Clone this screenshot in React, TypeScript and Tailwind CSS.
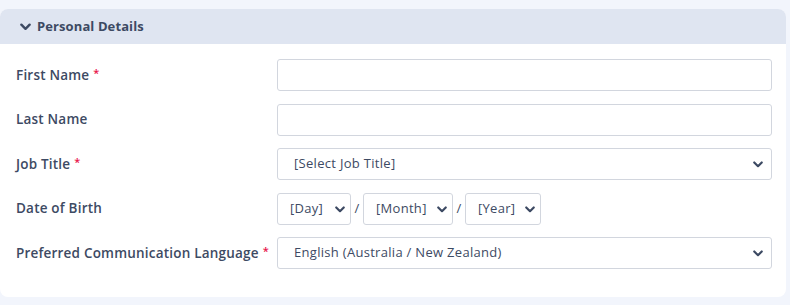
import { useState } from "react";

const Chevron = ({ className = "" }: { className?: string }) => (
  <svg viewBox="0 0 12 8" className={className} fill="none">
    <path d="M1.5 1.5 6 6l4.5-4.5" stroke="currentColor" strokeWidth="2.6" strokeLinecap="round" strokeLinejoin="round" />
  </svg>
);

const Req = () => <span className="ml-1 text-[#e8134a] text-[11px] align-top">*</span>;

const SelectBox = ({
  options,
  className = "",
  pad = "pl-4 pr-7",
  chevron = "right-[9px]",
}: {
  options: string[];
  className?: string;
  pad?: string;
  chevron?: string;
}) => (
  <div className={"relative " + className}>
    <select className={"w-full h-8 appearance-none rounded-[3px] border border-[#d2d6de] bg-white text-[13px] tracking-[0.3px] text-[#3d4a63] outline-none " + pad}>
      {options.map((o) => (
        <option key={o}>{o}</option>
      ))}
    </select>
    <Chevron className={"pointer-events-none absolute top-[13px] w-[10px] h-[7px] text-[#3d4a63] " + chevron} />
  </div>
);

const Row = ({ label, required, children }: { label: string; required?: boolean; children: React.ReactNode }) => (
  <div className="flex items-center h-8">
    <div className="w-[261px] shrink-0 text-[13.5px] tracking-[0.2px] font-semibold text-[#3d4a63]">
      {label}
      {required && <Req />}
    </div>
    <div className="flex-1">{children}</div>
  </div>
);

const App = () => {
  const [form, setForm] = useState({ firstName: "", lastName: "" });

  return (
    <div className="w-[790px] h-[305px] bg-[#f2f5fc] pt-[9px] pr-1 pb-2" style={{ fontFamily: '"Open Sans", "Liberation Sans", sans-serif' }}>
      <div className="rounded-lg bg-white overflow-hidden h-[288px]">
        <div className="flex items-center gap-[6px] h-[35px] bg-[#dfe5f1] pl-5 text-[13px] tracking-[0.1px] font-bold text-[#3d4a63]">
          <Chevron className="w-[11px] h-[8px]" />
          Personal Details
        </div>
        <div className="flex flex-col gap-[12.5px] pl-4 pr-[14px] pt-[15px]">
          <Row label="First Name" required>
            <input
              value={form.firstName}
              onChange={(e) => setForm({ ...form, firstName: e.target.value })}
              className="w-full h-8 rounded-[3px] border border-[#d2d6de] bg-white px-3 text-[13px] outline-none"
            />
          </Row>
          <Row label="Last Name">
            <input
              value={form.lastName}
              onChange={(e) => setForm({ ...form, lastName: e.target.value })}
              className="w-full h-8 rounded-[3px] border border-[#d2d6de] bg-white px-3 text-[13px] outline-none"
            />
          </Row>
          <Row label="Job Title" required>
            <SelectBox options={["[Select Job Title]"]} />
          </Row>
          <Row label="Date of Birth">
            <div className="flex items-center text-[13px] text-[#3d4a63]">
              <SelectBox options={["[Day]"]} className="w-[74px]" pad="pl-3 pr-5" chevron="right-[6px]" />
              <span className="w-3 text-center">/</span>
              <SelectBox options={["[Month]"]} className="w-[90px]" pad="pl-3 pr-5" chevron="right-[6px]" />
              <span className="w-3 text-center">/</span>
              <SelectBox options={["[Year]"]} className="w-[76px]" pad="pl-3 pr-5" chevron="right-[6px]" />
            </div>
          </Row>
          <Row label="Preferred Communication Language" required>
            <SelectBox options={["English (Australia / New Zealand)"]} />
          </Row>
        </div>
      </div>
    </div>
  );
};

export default App;
